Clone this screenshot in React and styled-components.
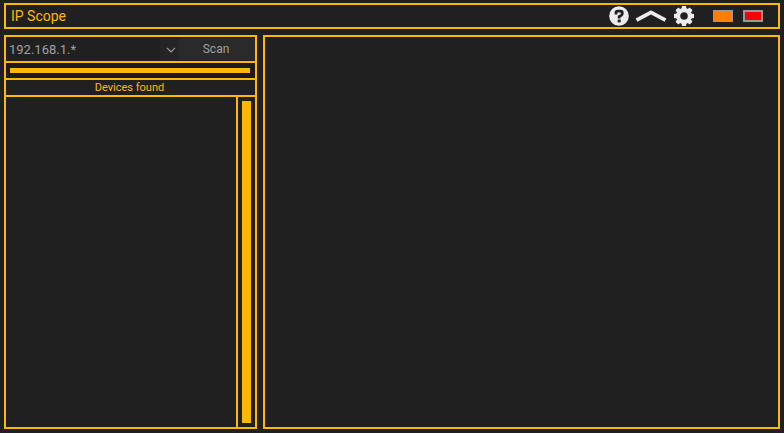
import React, { useState } from "react";
import styled, { createGlobalStyle } from "styled-components";

const amber = "#ffb800";

const GlobalStyle = createGlobalStyle`
  * { box-sizing: border-box; }
  body {
    margin: 0;
    background: #202020;
    color: ${amber};
    font-family: Roboto, "Liberation Sans", sans-serif;
  }
  button, input { font: inherit; }
`;

const Window = styled.div`
  min-height: 100vh;
  display: flex;
  flex-direction: column;
  gap: 6px;
  padding: 3px 4px 4px;
`;

const TitleBar = styled.header`
  display: flex;
  align-items: center;
  height: 26px;
  padding: 0 15px 0 5px;
  border: 2px solid ${amber};
`;

const Title = styled.h1`
  flex: 1;
  margin: 0;
  font-size: 14px;
  line-height: 22px;
  font-weight: 400;
`;

const Tools = styled.div`
  display: flex;
  align-items: center;
  gap: 6px;
  margin-right: 19px;
`;

const IconButton = styled.button`
  display: flex;
  padding: 0;
  border: 0;
  background: none;
  color: #ececec;
`;

const WindowButtons = styled.div`
  display: flex;
  gap: 10px;
`;

const SwatchButton = styled.button`
  width: 20px;
  height: 12px;
  padding: 0;
  border: ${(p) => p.$edge} solid #999;
  background: ${(p) => p.$fill};
`;

const Body = styled.main`
  flex: 1;
  display: grid;
  grid-template-columns: 253px 1fr;
  gap: 6px;
`;

const Sidebar = styled.section`
  display: flex;
  flex-direction: column;
  border: 2px solid ${amber};
`;

const Details = styled.section`
  border: 2px solid ${amber};
`;

const ScanRow = styled.form`
  display: flex;
  align-items: stretch;
  height: 24px;
  color: #a0a0a0;
`;

const RangeInput = styled.input`
  flex: 1;
  min-width: 0;
  padding: 0 3px;
  border: 0;
  outline: 0;
  background: #202020;
  color: inherit;
  font-size: 13px;
`;

const DropButton = styled.button`
  display: flex;
  align-items: center;
  justify-content: center;
  width: 19px;
  margin: 2px 0 1px;
  padding: 0 0 0 2px;
  border: 0;
  background: #242424;
  color: inherit;
`;

const ScanButton = styled.button`
  width: 76px;
  margin: 1px 0;
  padding: 0 2px 0 0;
  border: 0;
  background: #2a2a2a;
  color: inherit;
  font-size: 12px;
`;

const ProgressTrack = styled.div`
  padding: 5px 5px 5px 4px;
  border-top: 2px solid ${amber};
  background: #1b1b1b;
`;

const ProgressFill = styled.div`
  height: 5px;
  background: ${amber};
`;

const ListHeading = styled.h2`
  margin: 0;
  padding-right: 2px;
  border: solid ${amber};
  border-width: 2px 0;
  font-size: 11px;
  line-height: 15px;
  font-weight: 400;
  text-align: center;
`;

const DeviceArea = styled.div`
  flex: 1;
  display: flex;
`;

const DeviceList = styled.ul`
  flex: 1;
  margin: 0;
  padding: 0;
  list-style: none;
`;

const ScrollTrack = styled.div`
  display: flex;
  padding: 4px;
  border-left: 2px solid ${amber};
`;

const ScrollThumb = styled.div`
  width: 9px;
  background: ${amber};
`;

function HelpIcon() {
  return (
    <svg width="20" height="20" viewBox="0 0 20 20" aria-hidden="true">
      <circle cx="10" cy="10" r="9.8" fill="currentColor" />
      <path
        d="M7 8.4V6.4Q7 5.2 8.4 5.2h3.4Q13.2 5.2 13.2 6.6v1.2q0 1-.9 1.6L10.2 10.6V12.4"
        fill="none"
        stroke="#202020"
        strokeWidth="2.8"
      />
      <rect x="8.7" y="13.6" width="3" height="2.8" fill="#202020" />
    </svg>
  );
}

function CollapseIcon() {
  return (
    <svg width="33" height="20" viewBox="0 0 33 20" aria-hidden="true">
      <path
        d="M1.5 14.2 16 6.4 30.5 14.2"
        fill="none"
        stroke="currentColor"
        strokeWidth="3.8"
        strokeLinejoin="round"
      />
    </svg>
  );
}

const teeth = [0, 45, 90, 135, 180, 225, 270, 315];

function GearIcon() {
  return (
    <svg width="20" height="20" viewBox="0 0 20 20" aria-hidden="true">
      <circle cx="10" cy="10" r="5.9" fill="none" stroke="currentColor" strokeWidth="4.2" />
      {teeth.map((angle) => (
        <path
          key={angle}
          d="M7.5 3.5 8 0h4l.5 3.5z"
          fill="currentColor"
          transform={`rotate(${angle} 10 10)`}
        />
      ))}
    </svg>
  );
}

function ChevronIcon() {
  return (
    <svg width="10" height="6" viewBox="0 0 10 6" aria-hidden="true">
      <path d="M1 .8 5 4.8 9 .8" fill="none" stroke="currentColor" strokeWidth="1.2" />
    </svg>
  );
}

export default function App() {
  const [range, setRange] = useState("192.168.1.*");
  return (
    <>
      <GlobalStyle />
      <Window>
        <TitleBar>
          <Title>IP Scope</Title>
          <Tools>
            <IconButton type="button" aria-label="Help"><HelpIcon /></IconButton>
            <IconButton type="button" aria-label="Collapse"><CollapseIcon /></IconButton>
            <IconButton type="button" aria-label="Settings"><GearIcon /></IconButton>
          </Tools>
          <WindowButtons>
            <SwatchButton type="button" aria-label="Minimize" $fill="#ff8000" $edge="1px" />
            <SwatchButton type="button" aria-label="Close" $fill="#ff0000" $edge="2px" />
          </WindowButtons>
        </TitleBar>
        <Body>
          <Sidebar>
            <ScanRow onSubmit={(e) => e.preventDefault()}>
              <RangeInput
                aria-label="IP range"
                value={range}
                onChange={(e) => setRange(e.target.value)}
              />
              <DropButton type="button" aria-label="Show ranges"><ChevronIcon /></DropButton>
              <ScanButton type="submit">Scan</ScanButton>
            </ScanRow>
            <ProgressTrack>
              <ProgressFill role="progressbar" aria-label="Scan progress" aria-valuenow={100} />
            </ProgressTrack>
            <ListHeading>Devices found</ListHeading>
            <DeviceArea>
              <DeviceList aria-label="Devices" />
              <ScrollTrack><ScrollThumb /></ScrollTrack>
            </DeviceArea>
          </Sidebar>
          <Details aria-label="Device details" />
        </Body>
      </Window>
    </>
  );
}
